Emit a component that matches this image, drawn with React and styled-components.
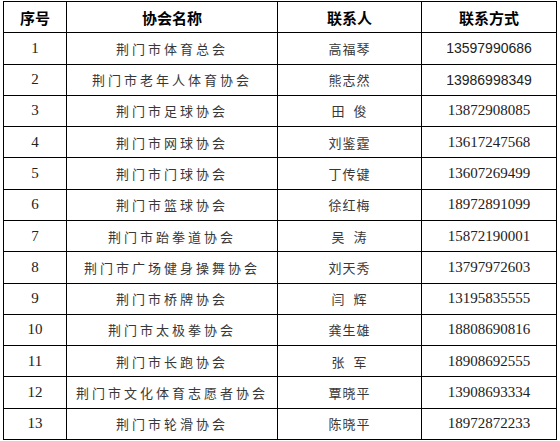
import React from 'react';
import styled, { createGlobalStyle } from 'styled-components';

const Global = createGlobalStyle`
  html, body {
    margin: 0;
    padding: 0;
    background: #fff;
  }
`;

const Page = styled.div`
  padding: 1px 0 0 3px;
`;

const Grid = styled.div`
  display: grid;
  grid-template-columns: 63px 211px 144px 135px;
  grid-template-rows: repeat(14, 1fr);
  width: 554px;
  height: 439px;
  box-sizing: border-box;
  border-left: 1px solid #000;
  border-top: 1px solid #000;
`;

const Cell = styled.div`
  display: flex;
  align-items: center;
  justify-content: center;
  border-right: 1px solid #000;
  border-bottom: 1px solid #000;
  white-space: pre;
  color: ${p => (p.$num ? '#222' : '#383838')};
  font-family: ${p => p.$num
    ? (p.$sans ? '"Liberation Sans", Arial, sans-serif' : '"Liberation Serif", "Times New Roman", serif')
    : '"Noto Sans CJK SC", sans-serif'};
  font-size: ${p => (p.$num ? (p.$sans ? '14px' : '15px') : '13px')};
  font-weight: ${p => (p.$head ? 700 : 400)};
  letter-spacing: ${p => (p.$num ? '0' : p.$tight ? '1px' : '3px')};
  ${p => p.$head && `
    font-family: "Noto Sans CJK SC", sans-serif;
    font-size: 15px;
    letter-spacing: 0;
    color: #000;
  `}
`;

const rows = [
  ['荆门市体育总会', '高福琴', '13597990686', true],
  ['荆门市老年人体育协会', '熊志然', '13986998349', true],
  ['荆门市足球协会', '田  俊', '13872908085'],
  ['荆门市网球协会', '刘鉴霆', '13617247568'],
  ['荆门市门球协会', '丁传键', '13607269499'],
  ['荆门市篮球协会', '徐红梅', '18972891099'],
  ['荆门市跆拳道协会', '吴  涛', '15872190001'],
  ['荆门市广场健身操舞协会', '刘天秀', '13797972603'],
  ['荆门市桥牌协会', '闫  辉', '13195835555'],
  ['荆门市太极拳协会', '龚生雄', '18808690816'],
  ['荆门市长跑协会', '张  军', '18908692555'],
  ['荆门市文化体育志愿者协会', '覃晓平', '13908693334'],
  ['荆门市轮滑协会', '陈晓平', '18972872233'],
];

export default function App() {
  return (
    <Page>
      <Global />
      <Grid>
        <Cell $head>序号</Cell>
        <Cell $head>协会名称</Cell>
        <Cell $head>联系人</Cell>
        <Cell $head>联系方式</Cell>
        {rows.map(([name, person, phone, sans], i) => (
          <React.Fragment key={i}>
            <Cell $num>{i + 1}</Cell>
            <Cell>{name}</Cell>
            <Cell $tight>{person}</Cell>
            <Cell $num $sans={sans}>{phone}</Cell>
          </React.Fragment>
        ))}
      </Grid>
    </Page>
  );
}
